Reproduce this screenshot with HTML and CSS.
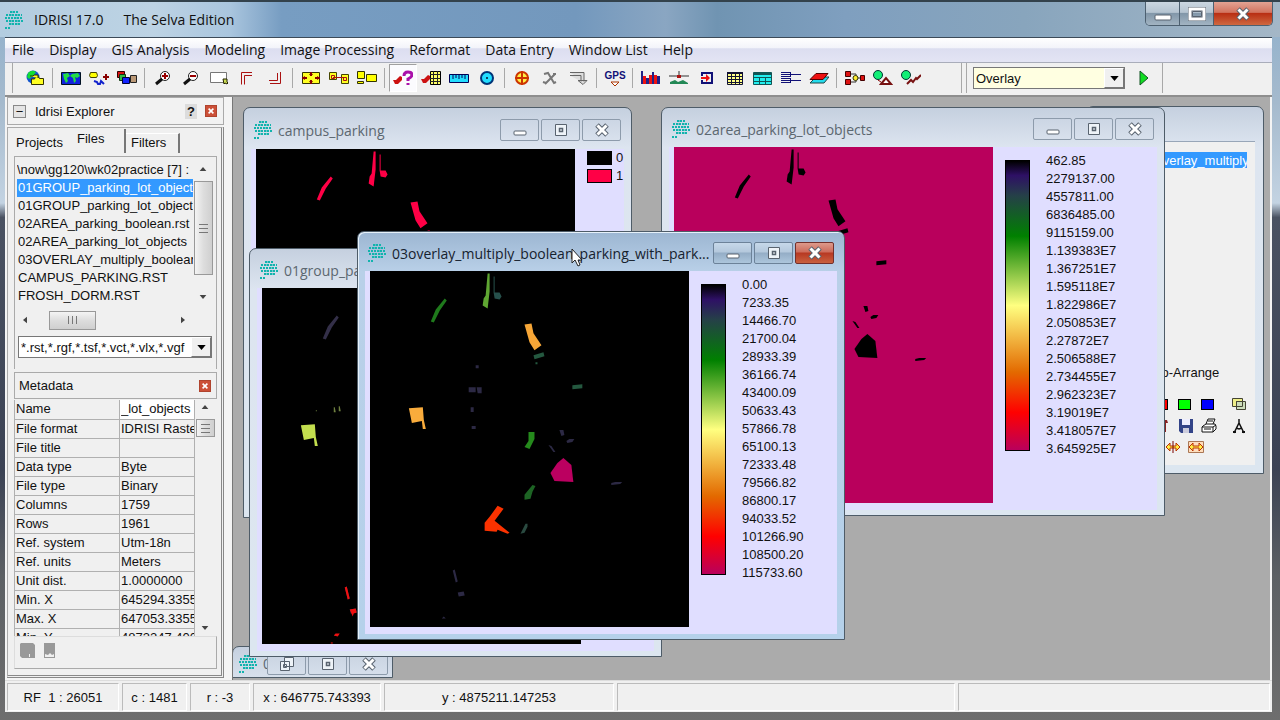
FILE: index.html
```html
<!DOCTYPE html>
<html lang="en">
  <head>
    <meta charset="UTF-8" />
    <meta name="viewport" content="width=device-width, initial-scale=1.0" />
    <title>IDRISI 17.0 The Selva Edition</title>
    <link rel="stylesheet" href="styles.css">
  </head>
  <body>
    <!-- Shared symbols -->
    <svg class="defs" width="0" height="0" aria-hidden="true">
      <symbol id="logo" viewBox="0 0 18 18">
        <g fill="none" stroke="#12b3ad" stroke-width="2" stroke-dasharray="2 1">
          <path d="M5 1h9M1 4h16M0 7h18M1 10h17M4 13h12M0 17h5" />
          <path d="M7 0v14M12 0v15" stroke-width="1" />
        </g>
      </symbol>
      <symbol id="min" viewBox="0 0 14 14">
        <rect x="1" y="8" width="12" height="4" rx="1" fill="#fff" stroke="#59636f" />
      </symbol>
      <symbol id="max" viewBox="0 0 14 14">
        <path d="M1.500 1.500h11v11h-11z" fill="#eef3f8" stroke="#59636f" />
        <path d="M5.500 5.500h3v3h-3z" fill="none" stroke="#59636f" stroke-width="1.500" />
      </symbol>
      <symbol id="restore" viewBox="0 0 14 14">
        <path d="M4.500 .5h9v9h-9zM.5 4.500h9v9h-9zM3.500 7.500h3v3h-3z" fill="#eef3f8" stroke="#59636f" />
      </symbol>
      <symbol id="close" viewBox="0 0 14 14">
        <path d="M2 2l10 10M12 2L2 12" stroke="#59636f" stroke-width="5" />
        <path d="M2.500 2.500l9 9M11.500 2.500l-9 9" stroke="#fff" stroke-width="3" />
      </symbol>
      <symbol id="down" viewBox="0 0 10 6"><path d="M0 0h10L5 6z" /></symbol>
      <symbol id="lots" viewBox="0 0 320 356">
        <path class="lot-strip" d="M75 27l2 2-7 10-6 12-3-1 5-12z" />
        <path class="lot-spike" d="M118 2h2v18l-2 17-5-3 1-7 2-3z" />
        <path class="lot-pond" d="M124 5h1v16l5 0 2 4-2 3-5-1-1-6z" />
        <path class="lot-north" d="M155 53l7-1 2 10 8 12-7 5-5-8z" />
        <path class="lot-teal" d="M164 84l10-3 1 4-10 3zM203 114l10-1v4l-10 1zM166 91h2v2h-2z" />
        <path class="lot-dusk" d="M106 94h3v3h-3zM99 116h7v5h-7zM107 116h5v6h-4zM101 136h3v5h-3zM102 155h4v3h-4zM190 159l4 0 1 5-3 1zM197 170l3-2 5 0-2 3-5 1zM179 174l3 1 4 6-2 0zM242 212l4-1 7 0-2 2-9 1zM83 300l2-1 3 12-2 1zM88 322l6-1 1 4-6 1zM72 348l2-2 2 2z" />
        <path class="lot-flag" d="M39 137l14-1 1 13 2 9h-3l-1-8-10 2z" />
        <path class="lot-specks" d="M54 122h1v1h-1zM72 119h1l1 5h-2zM77 118h1l1 5h-2z" />
        <path class="lot-green" d="M159 161h6v7l-5 10-5-2 4-6z" />
        <path class="lot-quad" d="M194 187l8 7 2 17-19-1-4-8 7-10z" />
        <path class="lot-forest" d="M163 214l3 1-3 6-2 7-6 1v-5z" />
        <path class="lot-vee" d="M128 235l6 3-9 12 15 12-2 1-10-4-1 2-12-1v-8l5-6z" />
        <path class="lot-slate" d="M156 253h2v3l-3 6-4 1z" />
        <path class="lot-south" d="M83 300l2-1 3 12-2 1zM88 322l6-1 1 4-3 1-1 3zM72 348l2-2 4 0-2 3zM69 355h2v1h-2z" />
      </symbol>
    </svg>

    <div class="app">
      <header class="titlebar">
        <svg class="logo"><use href="#logo" /></svg>
        <h1><span>IDRISI 17.0</span><span>The Selva Edition</span></h1>
        <div class="app-controls">
          <button type="button" aria-label="Minimize"><svg width="18" height="14" viewBox="0 0 18 14"><rect x="1" y="8" width="16" height="5" rx="1" fill="#fff" stroke="#59636f" /></svg></button>
          <button type="button" aria-label="Maximize"><svg width="18" height="14" viewBox="0 0 18 14"><path d="M2 2h14v10H2z" fill="none" stroke="#59636f" stroke-width="4" /><path d="M2 2h14v10H2z" fill="none" stroke="#fff" stroke-width="3" /><path d="M4.500 4.500h9v5h-9z" fill="none" stroke="#59636f" /></svg></button>
          <button type="button" class="app-close" aria-label="Close"><svg class="glyph"><use href="#close" /></svg></button>
        </div>
      </header>

      <nav class="menubar">
        <button type="button">File</button>
        <button type="button">Display</button>
        <button type="button">GIS Analysis</button>
        <button type="button">Modeling</button>
        <button type="button">Image Processing</button>
        <button type="button">Reformat</button>
        <button type="button">Data Entry</button>
        <button type="button">Window List</button>
        <button type="button">Help</button>
      </nav>

      <div class="toolbar">
        <div class="tools">
          <button type="button" aria-label="Explorer"><svg viewBox="0 0 20 16"><circle cx="8" cy="7" r="6.500" fill="#15c" /><path d="M3 3q4-4 8-1l-3 4-4 3-2-2z" fill="#1d3" /><path d="M6.500 9h3l1-2h3l1 1.500h4v6h-12z" fill="#ff2" stroke="#330" /><path d="M5 6h3l1-1h4v3" fill="#ff2" stroke="#330" /></svg></button>
          <i></i>
          <button type="button" aria-label="Display launcher"><svg viewBox="0 0 20 16"><path d="M.5 2.500h19v12H.5z" fill="#12d" stroke="#012" /><path d="M2 4l5-1 2 3-3 2 1 3-2 2-2-4zM11 4l6-1 2 3-3 2-2-1 1 4-2 2-1-5-3-2z" fill="#2d4" /></svg></button>
          <button type="button" aria-label="Add layer"><svg viewBox="0 0 20 16"><path d="M1.500 2.500h6l1 3-1 2h-6l-1-2z" fill="#ff0" stroke="#440" /><path d="M5 11l3 1 1 2h2l1-3 3 3" fill="none" stroke="#12c" stroke-width="2" /><path d="M14 7h6M17 4v6" stroke="#800" stroke-width="2" /></svg></button>
          <button type="button" aria-label="Composer"><svg viewBox="0 0 20 16"><path d="M.5 1.500h7v6h-7z" fill="#d11" stroke="#300" /><path d="M2.500 4.500h6v6h-6z" fill="#3b4" stroke="#131" /><path d="M5.500 7.500h7v6h-7z" fill="#12f" stroke="#003" /><path d="M13.500 5.500h6v7h-6z" fill="#b97" stroke="#222" /></svg></button>
          <i></i>
          <button type="button" aria-label="Zoom in"><svg viewBox="0 0 20 16"><circle cx="12" cy="6" r="4.500" fill="#fff" stroke="#222" /><path d="M9 9l-6 5" stroke="#111" stroke-width="3" /><path d="M9 6h6M12 3v6" stroke="#900" stroke-width="2" /></svg></button>
          <button type="button" aria-label="Zoom out"><svg viewBox="0 0 20 16"><circle cx="12" cy="6" r="4.500" fill="#fff" stroke="#222" /><path d="M9 9l-6 5" stroke="#111" stroke-width="3" /><path d="M9 6h6" stroke="#900" stroke-width="2" /></svg></button>
          <button type="button" aria-label="Zoom window"><svg viewBox="0 0 20 16"><path d="M1.500 2.500h16v10h-16z" fill="#fff" stroke="#777" /><path d="M14 9h4v3l1 1-1 1-2-1-1 1z" fill="#cd5" stroke="#220" /></svg></button>
          <button type="button" aria-label="Full extent"><svg viewBox="0 0 20 16"><path d="M15 2.500H4.500v12M15 5.500H7.500v9" fill="none" stroke="#a11" /></svg></button>
          <button type="button" aria-label="Fit window"><svg viewBox="0 0 20 16"><path d="M5 13.500h10.500V2M4 10.500h8.500V3" fill="none" stroke="#a11" /></svg></button>
          <i></i>
          <button type="button" aria-label="Full screen"><svg viewBox="0 0 20 16"><path d="M1.500 2.500h17v11h-17z" fill="#ff2" stroke="#330" /><path d="M1 8h5M19 8h-5M10 2v4M10 14v-4" stroke="#800" stroke-width="2" /><path d="M8 5h4l-2-3zM8 11h4l-2 3zM4 6v4L1 8zM16 6v4l3-2z" fill="#800" /></svg></button>
          <button type="button" aria-label="Link maps"><svg viewBox="0 0 20 16"><path d="M.5 2.500h7v7h-7zM12.500 4.500h7v9h-7z" fill="#ff2" stroke="#440" /><path d="M4 7.500h12" stroke="#a11" /><path d="M2.500 5.500h3v3h-3zM14.500 7.500h3v3h-3z" fill="none" stroke="#a11" /></svg></button>
          <button type="button" aria-label="Arrange maps"><svg viewBox="0 0 20 16"><path d="M.5 1.500h7v7h-7zM9.500 4.500h10v7h-10zM.5 11.500h6v2h-6z" fill="#ff0" stroke="#330" /></svg></button>
          <i></i>
          <button type="button" class="pressed" aria-label="Cursor inquiry"><svg viewBox="0 0 20 16"><path d="M0 10h3l4-4 2 1v3l-4 4H2z" fill="#c11" /><path d="M11 6q0-4 4-4t4 3q0 2-4 4v2M15 13v2" fill="none" stroke="#a1a" stroke-width="3" /></svg></button>
          <button type="button" aria-label="Feature properties"><svg viewBox="0 0 20 16"><path d="M0 9h3l4-4 2 1v3l-4 4H2z" fill="#c11" /><path d="M9.500 1.500h10v13h-10z" fill="#ff6" stroke="#000" /><path d="M12.500 1v13M16.500 1v13M9 4.500h10M9 8.500h10M9 11.500h10" stroke="#222" /></svg></button>
          <button type="button" aria-label="Measure"><svg viewBox="0 0 20 16"><path d="M.5 4.500h19v8H.5z" fill="#2df" stroke="#005" /><path d="M4 5v4M7 5v3M10 5v4M13 5v3M16 5v4" stroke="#005" /></svg></button>
          <button type="button" aria-label="Buffer"><svg viewBox="0 0 20 16"><circle cx="10" cy="8" r="6" fill="#2df" stroke="#037" stroke-width="2" /><circle cx="10" cy="8" r="1" fill="#013" /></svg></button>
          <i></i>
          <button type="button" aria-label="Digitize"><svg viewBox="0 0 20 16"><circle cx="9" cy="8" r="6" fill="#fe4" stroke="#c30" stroke-width="2" /><path d="M9 1v14M2 8h14" stroke="#c30" stroke-width="2" /></svg></button>
          <button type="button" aria-label="Delete feature"><svg viewBox="0 0 20 16"><path d="M3 4l4-1 6 10 2-1M14 4L4 14M2 12l3 1M12 4h3" fill="none" stroke="#777" stroke-width="2" /></svg></button>
          <button type="button" aria-label="Save digitized data"><svg viewBox="0 0 20 16"><path d="M1 2.500h14v9M1 5.500h11v6M9 10.500h9l-4 4z" fill="#ddd" stroke="#666" /></svg></button>
          <i></i>
          <button type="button" class="gps" aria-label="GPS"><span>GPS</span><svg viewBox="0 0 10 5"><path d="M1 1h8L5 5z" fill="#fff" stroke="#a30" /></svg></button>
          <i></i>
          <button type="button" aria-label="Histogram"><svg viewBox="0 0 20 16"><path d="M0 1h2v13H0zM5 8h3v6H5zM11 2h2v12h-2zM16 6h3v8h-3z" fill="#228" /><path d="M2 6h3v8H2zM8 5h3v9H8zM13 5h3v9h-3z" fill="#e11" /></svg></button>
          <button type="button" aria-label="Image to image"><svg viewBox="0 0 20 16"><path d="M0 6h20M10 1v7" stroke="#333" /><path d="M8 5h4v3H8z" fill="#a11" /><path d="M1 14v-2l5-2 3 2 5-2 5 3v1z" fill="#285" /></svg></button>
          <button type="button" aria-label="Import"><svg viewBox="0 0 20 16"><path d="M5 6V3h10v10H5v-3" fill="none" stroke="#117" stroke-width="2" /><path d="M4 7h5V4l4 4-4 4V9H4z" fill="#e11" /></svg></button>
          <button type="button" aria-label="Database"><svg viewBox="0 0 20 16"><path d="M2.500 2.500h15v12h-15z" fill="#ff8" stroke="#113" /><path d="M2 3h16" stroke="#113" stroke-width="2" /><path d="M6.500 2v12M10.500 2v12M14.500 2v12M2 6.500h15M2 9.500h15M2 12.500h15" stroke="#113" /></svg></button>
          <button type="button" aria-label="Edit values"><svg viewBox="0 0 20 16"><path d="M.5 2.500h18v12H.5z" fill="#2ee" stroke="#155" /><path d="M1 4h18" stroke="#155" stroke-width="2" /><path d="M1 7.500h18M6.500 8v7M12.500 8v7M1 11.500h18" stroke="#155" /></svg></button>
          <button type="button" aria-label="Reclass"><svg viewBox="0 0 20 16"><path d="M0 2.500h9M0 4.500h9M0 6.500h9M0 8.500h9M0 10.500h9M0 12.500h9M9.500 2v5M9.500 8v5M10 4.500h10M10 10.500h10" fill="none" stroke="#117" /></svg></button>
          <button type="button" aria-label="Overlay"><svg viewBox="0 0 20 16"><path d="M1 13l6-6h13l-5 6H1z" fill="#2de" stroke="#244" /><path d="M1 9.500l6-6h12l-5 6z" fill="#e11" stroke="#500" /></svg></button>
          <i></i>
          <button type="button" aria-label="Macro modeler"><svg viewBox="0 0 20 16"><path d="M5 4h6v8H5M12 8h5" fill="none" stroke="#333" /><path d="M.5 1.500h5v5h-5zM.5 9.500h5v5h-5zM15.500 5.500h4v5h-4z" fill="#d11" stroke="#400" /><circle cx="10.500" cy="8" r="2.500" fill="#fe3" stroke="#330" /></svg></button>
          <button type="button" aria-label="Land change modeler"><svg viewBox="0 0 20 16"><circle cx="5" cy="5" r="4.500" fill="#1e7" stroke="#033" /><path d="M5 10l3 2" stroke="#800" /><path d="M8 14l5-6 5 6z" fill="#fff" stroke="#711" stroke-width="2" /></svg></button>
          <button type="button" aria-label="Earth trends modeler"><svg viewBox="0 0 20 16"><circle cx="5" cy="5" r="4.500" fill="#1e7" stroke="#033" /><path d="M6 14l4-4 2 2 3-4 1 1 4-4" fill="none" stroke="#711" stroke-width="2" /></svg></button>
        </div>
        <div class="shortcut">
          <label class="combo combo-shortcut">
            <select aria-label="Shortcut"><option>Overlay</option></select>
            <span class="combo-arrow"><svg><use href="#down" /></svg></span>
          </label>
          <button type="button" class="run" aria-label="Run"><svg viewBox="0 0 10 16"><path d="M1 1l8 7-8 7z" fill="#1d2" stroke="#152" /></svg></button>
        </div>
      </div>

      <div class="main">
        <aside class="explorer">
          <div class="panel-head">
            <span class="fold">−</span>
            <h2>Idrisi Explorer</h2>
            <b>?</b>
            <button type="button" class="x" aria-label="Close explorer"><svg viewBox="0 0 10 10"><path d="M2 2l6 6M8 2L2 8" stroke="#fff" stroke-width="2" /></svg></button>
          </div>
          <div class="panel-body">
            <div class="tabs">
              <button type="button">Projects</button>
              <button type="button" class="active">Files</button>
              <button type="button">Filters</button>
            </div>
            <div class="files">
              <div class="scroll-area">
                <ul class="file-list">
                  <li class="folder">\now\gg120\wk02practice [7] :</li>
                  <li class="selected">01GROUP_parking_lot_objects.rgf</li>
                  <li>01GROUP_parking_lot_objects.rst</li>
                  <li>02AREA_parking_boolean.rst</li>
                  <li>02AREA_parking_lot_objects</li>
                  <li>03OVERLAY_multiply_boolean</li>
                  <li>CAMPUS_PARKING.RST</li>
                  <li>FROSH_DORM.RST</li>
                </ul>
                <div class="vscroll">
                  <svg class="up"><use href="#down" /></svg>
                  <span class="thumb thumb-long"></span>
                  <svg class="dn"><use href="#down" /></svg>
                </div>
              </div>
              <div class="hscroll">
                <svg class="lf"><use href="#down" /></svg>
                <span class="hthumb"></span>
                <svg class="rt"><use href="#down" /></svg>
              </div>
              <label class="combo combo-filter">
                <select aria-label="File filter"><option>*.rst,*.rgf,*.tsf,*.vct,*.vlx,*.vgf</option></select>
                <span class="combo-arrow"><svg><use href="#down" /></svg></span>
              </label>
            </div>
            <div class="meta">
              <div class="meta-head">
                <h2>Metadata</h2>
                <button type="button" class="x" aria-label="Close metadata"><svg viewBox="0 0 10 10"><path d="M2 2l6 6M8 2L2 8" stroke="#fff" stroke-width="2" /></svg></button>
              </div>
              <div class="meta-rows">
                <div class="meta-clip">
                  <table>
                    <tr><th><label for="metaName">Name</label></th><td class="edit"><input id="metaName" type="text" value="_lot_objects" /></td></tr>
                    <tr><th>File format</th><td>IDRISI Raster</td></tr>
                    <tr><th>File title</th><td></td></tr>
                    <tr><th>Data type</th><td>Byte</td></tr>
                    <tr><th>File type</th><td>Binary</td></tr>
                    <tr><th>Columns</th><td>1759</td></tr>
                    <tr><th>Rows</th><td>1961</td></tr>
                    <tr><th>Ref. system</th><td>Utm-18n</td></tr>
                    <tr><th>Ref. units</th><td>Meters</td></tr>
                    <tr><th>Unit dist.</th><td>1.0000000</td></tr>
                    <tr><th>Min. X</th><td>645294.3355</td></tr>
                    <tr><th>Max. X</th><td>647053.3355</td></tr>
                    <tr><th>Min. Y</th><td>4873247.400</td></tr>
                  </table>
                </div>
                <div class="vscroll">
                  <svg class="up"><use href="#down" /></svg>
                  <span class="thumb"></span>
                  <svg class="dn"><use href="#down" /></svg>
                </div>
              </div>
              <div class="meta-foot">
                <button type="button" aria-label="Save"><svg viewBox="0 0 15 15"><path d="M1 0h12l2 2v13H2l-2-2V1zM9 11h1v3H9z" fill="#999" fill-rule="evenodd" /></svg></button>
                <button type="button" aria-label="Categories"><svg viewBox="0 0 12 15"><path d="M0 0h11v15H0zM1 14h9v-3l-2 1-2-2-2 2-3-1z" fill="#999" fill-rule="evenodd" /></svg></button>
              </div>
            </div>
          </div>
        </aside>

        <main class="desktop">
          <section class="window win-mini">
            <div class="win-title">
              <svg class="logo"><use href="#logo" /></svg>
              <h3>03overlay</h3>
              <div class="win-controls">
                <button type="button" aria-label="Restore"><svg class="glyph"><use href="#restore" /></svg></button>
                <button type="button" aria-label="Maximize"><svg class="glyph"><use href="#max" /></svg></button>
                <button type="button" aria-label="Close"><svg class="glyph"><use href="#close" /></svg></button>
              </div>
            </div>
          </section>

          <section class="window win-composer">
            <div class="composer">
              <div class="layer">03overlay_multiply</div>
              <p class="arrange">Auto-Arrange</p>
              <div class="composer-tools">
                <button type="button" class="swatch red" aria-label="Red"></button>
                <button type="button" class="swatch lime" aria-label="Green"></button>
                <button type="button" class="swatch blue" aria-label="Blue"></button>
                <button type="button" aria-label="Blend"><svg viewBox="0 0 16 16"><path d="M1.500 2.500h10v8h-10z" fill="#ee8" stroke="#443" /><path d="M5.500 5.500h9v8h-9z" fill="#cdb" stroke="#443" /><path d="M5.500 5.500h6v5h-6z" fill="none" stroke="#443" /></svg></button>
                <button type="button" aria-label="Layer properties"><svg viewBox="0 0 16 16"><path d="M2 2h10l1 3h-2v9H9V5" fill="#822" /></svg></button>
                <button type="button" aria-label="Save composition"><svg viewBox="0 0 16 16"><path d="M1 1h14v14H3l-2-2z" fill="#348" /><path d="M4 1h8v6H4z" fill="#eef" /><path d="M5 10h6v5H5z" fill="#ccd" /></svg></button>
                <button type="button" aria-label="Print"><svg viewBox="0 0 16 16"><path d="M5 6l2-5h7l-2 5M2 8l3-2h9l1 2v3l-3 3H1V9zM1 9h11v5M12 9l3-2" fill="#fff" stroke="#111" /><path d="M3 11h7M7 3h5" stroke="#111" /></svg></button>
                <button type="button" aria-label="Map properties"><svg viewBox="0 0 16 16"><path d="M8 1v4M3 15l5-10 5 10M5 10l3 1 3-1" fill="none" stroke="#111" stroke-width="1.500" /><path d="M2 14h3M11 14h3" stroke="#111" stroke-width="2" /></svg></button>
              </div>
              <div class="composer-tools stretch">
                <button type="button" aria-label="Stretch"><svg viewBox="0 0 16 16"><path d="M1 8l4-4v3h6V4l4 4-4 4V9H5v3z" fill="#fe4" stroke="#b30" /><path d="M8 2v12" stroke="#700" /></svg></button>
                <button type="button" aria-label="Stretch extent"><svg viewBox="0 0 16 16"><path d="M.5 2.500h15v11H.5z" fill="#fdb" stroke="#a75" /><path d="M1 8l4-4v3h6V4l4 4-4 4V9H5v3z" fill="#fe4" stroke="#b30" /></svg></button>
              </div>
            </div>
          </section>

          <section class="window win-campus">
            <div class="win-title">
              <svg class="logo"><use href="#logo" /></svg>
              <h3>campus_parking</h3>
              <div class="win-controls">
                <button type="button" aria-label="Minimize"><svg class="glyph"><use href="#min" /></svg></button>
                <button type="button" aria-label="Maximize"><svg class="glyph"><use href="#max" /></svg></button>
                <button type="button" aria-label="Close"><svg class="glyph"><use href="#close" /></svg></button>
              </div>
            </div>
            <div class="win-body">
              <svg class="map"><use href="#lots" /></svg>
              <ul class="key">
                <li><span class="key-box"></span>0</li>
                <li><span class="key-box one"></span>1</li>
              </ul>
            </div>
          </section>

          <section class="window win-area">
            <div class="win-title">
              <svg class="logo"><use href="#logo" /></svg>
              <h3>02area_parking_lot_objects</h3>
              <div class="win-controls">
                <button type="button" aria-label="Minimize"><svg class="glyph"><use href="#min" /></svg></button>
                <button type="button" aria-label="Maximize"><svg class="glyph"><use href="#max" /></svg></button>
                <button type="button" aria-label="Close"><svg class="glyph"><use href="#close" /></svg></button>
              </div>
            </div>
            <div class="win-body">
              <svg class="map"><use href="#lots" /></svg>
              <div class="legend">
                <span class="ramp"></span>
                <ul>
                  <li>462.85</li>
                  <li>2279137.00</li>
                  <li>4557811.00</li>
                  <li>6836485.00</li>
                  <li>9115159.00</li>
                  <li>1.139383E7</li>
                  <li>1.367251E7</li>
                  <li>1.595118E7</li>
                  <li>1.822986E7</li>
                  <li>2.050853E7</li>
                  <li>2.27872E7</li>
                  <li>2.506588E7</li>
                  <li>2.734455E7</li>
                  <li>2.962323E7</li>
                  <li>3.19019E7</li>
                  <li>3.418057E7</li>
                  <li>3.645925E7</li>
                </ul>
              </div>
            </div>
          </section>

          <section class="window win-group">
            <div class="win-title">
              <svg class="logo"><use href="#logo" /></svg>
              <h3>01group_parking_lot_objects</h3>
            </div>
            <div class="win-body">
              <svg class="map"><use href="#lots" /></svg>
            </div>
          </section>

          <section class="window win-overlay">
            <div class="win-title">
              <svg class="logo"><use href="#logo" /></svg>
              <h3>03overlay_multiply_boolean_parking_with_park...</h3>
              <div class="win-controls">
                <button type="button" aria-label="Minimize"><svg class="glyph"><use href="#min" /></svg></button>
                <button type="button" aria-label="Maximize"><svg class="glyph"><use href="#max" /></svg></button>
                <button type="button" class="win-close" aria-label="Close"><svg class="glyph"><use href="#close" /></svg></button>
              </div>
            </div>
            <div class="win-body">
              <svg class="map"><use href="#lots" /></svg>
              <div class="legend">
                <span class="ramp"></span>
                <ul>
                  <li>0.00</li>
                  <li>7233.35</li>
                  <li>14466.70</li>
                  <li>21700.04</li>
                  <li>28933.39</li>
                  <li>36166.74</li>
                  <li>43400.09</li>
                  <li>50633.43</li>
                  <li>57866.78</li>
                  <li>65100.13</li>
                  <li>72333.48</li>
                  <li>79566.82</li>
                  <li>86800.17</li>
                  <li>94033.52</li>
                  <li>101266.90</li>
                  <li>108500.20</li>
                  <li>115733.60</li>
                </ul>
              </div>
            </div>
          </section>

          <svg class="pointer" viewBox="0 0 12 19"><path d="M1 1v14l3-3 3 6 2-1-2-5h4z" fill="#fff" stroke="#222" /></svg>
        </main>
      </div>

      <footer class="statusbar">
        <span class="st-rf">RF&nbsp; 1 : 26051</span>
        <span class="st-c">c : 1481</span>
        <span class="st-r">r : -3</span>
        <span class="st-x">x : 646775.743393</span>
        <span class="st-y">y : 4875211.147253</span>
        <span class="st-msg"></span>
        <span class="st-end"></span>
      </footer>
    </div>
  </body>
</html>
```

FILE: styles.css
```css
* {
  box-sizing: border-box;
}
body {
  margin: 0;
  font-family: "Liberation Sans", Arial, sans-serif;
  font-size: 13px;
  color: #111;
}
h1,
h2,
h3,
p,
ul {
  margin: 0;
  padding: 0;
  font-size: inherit;
  font-weight: normal;
  list-style: none;
}
button {
  border: none;
  background: none;
  padding: 0;
  margin: 0;
  font: inherit;
  color: inherit;
}
svg {
  display: block;
}
.defs {
  position: absolute;
}
.app {
  display: flex;
  flex-direction: column;
  height: 100vh;
  padding: 0 8px 8px 5px;
  border-top: 2px solid #33424c;
  background: linear-gradient(#8fb0cc, #a5bacd 14%, #c3d3e2 28%, #4a5262 30%, #3b4254 65%, #5c6064 80%, #6e6e6e);
}

/* Title bar */
.titlebar {
  display: flex;
  align-items: center;
  height: 35px;
  margin: 0 -8px 0 -5px;
  padding: 0 7px 0 5px;
  background: linear-gradient(90deg, #b3cde0, #bdd3e4 12%, #a9c5de 18%, #779dc2 22%, #7398bd 45%, #8aa6c2 52%, #7094b2 56%, #7f9fbf 66%, #88a5bd 80%, #a4b7c7);
  font-family: "Open Sans", "Noto Sans", sans-serif;
  font-size: 14px;
}
.logo {
  width: 18px;
  height: 18px;
  flex: none;
}
.titlebar h1 {
  display: flex;
  gap: 20px;
  flex: 1;
  padding-left: 11px;
}
.app-controls {
  display: flex;
  align-self: flex-start;
  height: 24px;
  border: 1px solid #4d6070;
  border-top: none;
  border-radius: 0 0 5px 5px;
  overflow: hidden;
}
.app-controls button {
  display: flex;
  align-items: center;
  justify-content: center;
  width: 34px;
  border-right: 1px solid #4d6070;
  background: linear-gradient(#cbd7e1, #b5c4d1 45%, #8297a9 50%, #a2b4c2);
}
.app-controls .app-close {
  width: 58px;
  border-right: none;
  background: linear-gradient(#e3a393, #d27460 45%, #b92f14 50%, #cf6840);
}
.glyph {
  width: 14px;
  height: 14px;
}

/* Menu */
.menubar {
  display: flex;
  gap: 15px;
  height: 26px;
  padding: 0 7px 2px;
  border-top: 1px solid #3c4a58;
  border-bottom: 1px solid #a9adba;
  background: linear-gradient(#fff, #f3f4fa 40%, #dcdef0 45%, #e3e4f4);
  font-family: "Open Sans", "Noto Sans", sans-serif;
  font-size: 14px;
}

/* Toolbar */
.toolbar {
  display: flex;
  height: 34px;
  padding-bottom: 2px;
  border-bottom: 2px solid #8e8e8e;
  background: #f0f0f0;
}
.tools {
  display: flex;
  align-items: center;
  width: 950px;
  padding-left: 8px;
  margin-left: 7px;
  border-left: 1px solid #a8a8a8;
  border-right: 1px solid #a8a8a8;
}
.tools button {
  display: flex;
  align-items: center;
  justify-content: center;
  width: 28px;
  height: 28px;
}
.tools svg {
  width: 20px;
  height: 16px;
}
.tools i {
  width: 1px;
  height: 20px;
  margin: 0 4px 0 3px;
  background: #a8a8a8;
}
.tools .pressed {
  background: #fbfbfe;
  border: 1px solid #a0a0a0;
  border-right-color: #fff;
  border-bottom-color: #fff;
}
.tools .gps {
  flex-direction: column;
  font-size: 10px;
  font-weight: bold;
  line-height: 10px;
  color: #117;
}
.tools .gps svg {
  width: 10px;
  height: 5px;
}
.shortcut {
  display: flex;
  align-items: center;
  gap: 14px;
  width: 197px;
  margin-left: 4px;
  padding-left: 6px;
  border-left: 1px solid #a8a8a8;
  border-right: 1px solid #a8a8a8;
}
.run svg {
  width: 10px;
  height: 16px;
}
.combo {
  display: flex;
  height: 22px;
  border: 1px solid #777;
  background: #fff;
}
.combo select {
  flex: 1;
  min-width: 0;
  appearance: none;
  border: none;
  border-radius: 0;
  padding: 0 2px;
  background: none;
  color: inherit;
  font: inherit;
}
.combo-arrow {
  display: flex;
  align-items: center;
  justify-content: center;
  width: 20px;
  background: #f0f0f0;
  border: 1px solid #fff;
  border-right-color: #777;
  border-bottom-color: #777;
  pointer-events: none;
}
.combo-arrow svg {
  width: 9px;
  height: 5px;
}
.combo-shortcut {
  width: 152px;
  background: #ffffe1;
}

/* Explorer panel */
.main {
  display: flex;
  flex: 1;
  min-height: 0;
  background: #f4f4f4;
}
.explorer {
  display: flex;
  flex-direction: column;
  width: 219px;
  margin-right: 8px;
  padding: 0 0 2px 2px;
}
.panel-head {
  display: flex;
  align-items: center;
  height: 28px;
  padding: 0 6px 0 5px;
  border: 1px solid #aaa;
  background: #f2f2f2;
}
.panel-head h2 {
  flex: 1;
  padding-left: 9px;
}
.panel-head b {
  padding: 0 2px;
  margin-right: 8px;
  background: #dcdcdc;
}
.fold {
  width: 13px;
  height: 13px;
  line-height: 11px;
  text-align: center;
  border: 1px solid #888;
  background: #e4e4e4;
}
.x {
  width: 12px;
  height: 12px;
  padding: 1px;
  background: #cc5038;
  border: 1px solid #b0442e;
}
.panel-body {
  display: flex;
  flex-direction: column;
  flex: 1;
  min-height: 0;
  margin-top: 2px;
  padding: 4px 4px 6px 6px;
  border: 1px solid #aaa;
  border-right: 3px double #888;
  border-bottom: 3px double #888;
  background: #f0f0f0;
}
.tabs {
  display: flex;
  align-items: flex-end;
  height: 21px;
}
.tabs button {
  height: 20px;
  padding: 0 7px 2px 2px;
}
.tabs .active {
  height: 24px;
  width: 56px;
  padding: 0 0 6px 7px;
  text-align: left;
  border-right: 2px solid #777;
}
.tabs button:last-child {
  border-top: 1px solid #fff;
  border-right: 2px solid #777;
  padding-left: 5px;
  width: 54px;
  text-align: left;
}
.files {
  padding: 4px 2px 6px 2px;
  margin-top: 3px;
  height: 213px;
  border-top: 1px solid #aaa;
  border-right: 1px solid #aaa;
  border-left: 1px solid #aaa;
}
.scroll-area {
  display: flex;
  height: 144px;
}
.file-list {
  width: 176px;
  overflow: hidden;
  line-height: 18px;
  white-space: nowrap;
}
.file-list li {
  padding-left: 1px;
}
.file-list .folder {
  padding-left: 0;
}
.file-list .selected {
  background: #3399ff;
  color: #fff;
}
.vscroll {
  display: flex;
  flex-direction: column;
  align-items: center;
  width: 20px;
  padding: 6px 0;
}
.vscroll svg,
.hscroll svg {
  width: 8px;
  height: 4px;
  fill: #444;
}
.vscroll .up {
  transform: rotate(180deg);
}
.vscroll .dn {
  margin-top: auto;
}
.thumb {
  width: 19px;
  height: 18px;
  margin-top: 10px;
  border: 1px solid #999;
  background: repeating-linear-gradient(#777 0 1px, transparent 1px 4px) center / 9px 9px no-repeat, linear-gradient(90deg, #f4f4f4, #ddd 50%, #cfcfcf);
}
.thumb-long {
  height: 94px;
}
.hscroll {
  display: flex;
  align-items: center;
  width: 177px;
  height: 20px;
  padding: 0 7px 0 4px;
  margin-top: 5px;
}
.lf {
  transform: rotate(90deg);
}
.rt {
  margin-left: auto;
  transform: rotate(-90deg);
}
.hthumb {
  width: 47px;
  height: 19px;
  margin-left: 20px;
  border: 1px solid #999;
  background: repeating-linear-gradient(90deg, #777 0 1px, transparent 1px 4px) center / 9px 8px no-repeat, linear-gradient(#f4f4f4, #ddd 50%, #cfcfcf);
}
.combo-filter {
  margin: 6px 2px 0 1px;
}

/* Metadata */
.meta {
  display: flex;
  flex-direction: column;
  flex: 1;
  min-height: 0;
  margin-top: 3px;
}
.meta-head {
  display: flex;
  align-items: center;
  justify-content: space-between;
  height: 27px;
  padding: 0 5px 0 4px;
  border: 1px solid #aaa;
}
.meta-rows {
  display: flex;
  flex: 1;
  min-height: 0;
}
.meta-clip {
  width: 181px;
  padding-top: 1px;
  overflow: hidden;
}
.meta table {
  width: 181px;
  table-layout: fixed;
  border-collapse: collapse;
}
.meta tr {
  height: 19px;
}
.meta th,
.meta td {
  overflow: hidden;
  padding: 0 1px;
  line-height: 18px;
  font-weight: normal;
  text-align: left;
  white-space: nowrap;
  border: 1px solid #b0b0b0;
  border-top: none;
}
.meta th {
  width: 105px;
}
.meta .edit {
  background: #fff;
}
.meta input {
  display: block;
  width: 100%;
  height: 18px;
  border: none;
  padding: 0;
  background: none;
  color: inherit;
  font: inherit;
}
.meta-foot {
  display: flex;
  align-items: center;
  gap: 9px;
  height: 33px;
  padding: 0 5px 4px;
  border: 1px solid #ddd;
  border-right-color: #aaa;
  border-bottom-color: #aaa;
}
.meta-foot svg {
  height: 15px;
}

/* Document windows */
.desktop {
  position: relative;
  flex: 1;
  overflow: hidden;
  margin-right: 2px;
  border-left: 1px solid #777;
  background: #ababab;
}
.window {
  position: absolute;
  border: 1px solid #4e5c68;
  border-radius: 7px 7px 0 0;
  padding: 0 12px 12px;
  background: linear-gradient(#c5d0df, #dde5f0 40px, #dce6f0);
  overflow: hidden;
  color: #5c6770;
}
.win-title {
  display: flex;
  align-items: center;
  height: 39px;
  padding-top: 3px;
  margin: 0 -2px;
}
.win-title h3 {
  flex: 1;
  padding-left: 6px;
  overflow: hidden;
  white-space: nowrap;
  font-family: "Open Sans", "Noto Sans", sans-serif;
  font-size: 14px;
}
.win-controls {
  display: flex;
  gap: 2px;
}
.win-controls button {
  display: flex;
  align-items: center;
  justify-content: center;
  width: 39px;
  height: 22px;
  border: 1px solid #8d9bab;
  border-radius: 2px;
}
.win-body {
  display: flex;
  margin: 0 -5px -7px;
  padding: 0 5px 7px;
  background: #e0deff;
  color: #111;
}
.map {
  width: 319px;
  height: 356px;
  flex: none;
  background: #000;
}
.win-campus {
  left: 10px;
  top: 10px;
  width: 389px;
}
.win-campus .win-title {
  height: 41px;
}
.win-area {
  left: 428px;
  top: 10px;
  width: 504px;
}
.win-group {
  left: 16px;
  top: 151px;
  width: 413px;
}
.win-overlay {
  left: 124px;
  top: 134px;
  width: 488px;
  color: #16222e;
  background: linear-gradient(#9cb6d2, #b9d0e8 40px, #b5d1ea);
  box-shadow: inset 1px 1px #e6f1fa;
}
.win-mini {
  left: -1px;
  top: 549px;
  width: 161px;
  height: 32px;
  padding: 0 4px;
}
.win-mini .win-title {
  height: 31px;
  padding-top: 2px;
  margin: 0 0 0 2px;
}
.win-overlay .win-controls button {
  border-color: #6c8299;
  background: linear-gradient(#c6d8ea, #b4c8dc 45%, #94adc6 50%, #adc6dc);
}
.win-overlay .win-controls .win-close {
  border-color: #73302c;
  background: linear-gradient(#dd9a8c, #cd6c5b 45%, #b73822 50%, #c9613f);
}

/* Lot colours */
.lot-strip { fill: var(--strip, var(--lot)); }
.lot-spike { fill: var(--spike, var(--lot)); }
.lot-pond { fill: var(--pond, var(--lot)); }
.lot-north { fill: var(--north, var(--lot)); }
.lot-teal { fill: var(--teal, var(--lot)); }
.lot-dusk { fill: var(--dusk, var(--lot)); }
.lot-flag { fill: var(--flag, var(--lot)); }
.lot-specks { fill: var(--specks, transparent); }
.lot-green { fill: var(--green, var(--lot)); }
.lot-quad { fill: var(--quad, var(--lot)); }
.lot-forest { fill: var(--forest, var(--lot)); }
.lot-vee { fill: var(--vee, var(--lot)); }
.lot-slate { fill: var(--slate, var(--lot)); }
.lot-south { fill: var(--south, transparent); }
.win-campus .map {
  --lot: #ff0046;
}
.win-area .map {
  --lot: #000;
  background: #b9005c;
}
.win-group .map {
  --lot: #332f48;
  --flag: #c3de4e;
  --specks: #6f8040;
  --south: #f01010;
}
.win-overlay .map {
  --strip: #1f7a1c;
  --spike: #5fa632;
  --pond: #26504b;
  --north: #f6a637;
  --teal: #24583f;
  --dusk: #2c2944;
  --flag: #f9ac3c;
  --green: #258a1c;
  --quad: #bb0060;
  --forest: #1d6424;
  --vee: #fb3200;
  --slate: #2a4a40;
}

/* Legends */
.key {
  padding: 0 0 0 12px;
  line-height: 18px;
}
.key li {
  display: flex;
  align-items: center;
  gap: 4px;
}
.key-box {
  width: 25px;
  height: 14px;
  border: 1px solid #000;
  background: #000;
}
.key-box.one {
  background: #ff0046;
}
.legend {
  display: flex;
  align-items: flex-start;
  gap: 16px;
  padding: 5px 0 0 12px;
  line-height: 18px;
}
.ramp {
  width: 25px;
  height: 291px;
  margin-top: 8px;
  border: 1px solid #000;
  background: linear-gradient(#000, #2e1065 5%, #254048 12%, #008000 26%, #ffff80 50%, #e36a00 73%, #ff0000 87%, #b9005c);
}

/* Composer */
.win-composer {
  left: 853px;
  top: 9px;
  width: 178px;
  padding: 34px 8px 8px;
}
.composer {
  height: 324px;
  padding: 10px 8px 0 0;
  border-top: 1px solid #98a6b8;
  background: #f0f0f0;
  color: #111;
}
.layer {
  height: 16px;
  padding-left: 46px;
  line-height: 17px;
  overflow: hidden;
  background: #3399ff;
  color: #fff;
}
.arrange {
  padding: 197px 0 0 47px;
  line-height: 16px;
}
.composer-tools {
  display: grid;
  grid-template-columns: 23px 23px 30px 16px;
  justify-content: end;
  row-gap: 6px;
  padding-top: 15px;
}
.composer-tools button {
  width: 16px;
  height: 16px;
}
.composer-tools .swatch {
  width: 13px;
  height: 11px;
  margin-top: 3px;
  border: 1px solid #000;
}
.red {
  background: #f00;
}
.lime {
  background: #0f0;
}
.blue {
  background: #00f;
}
.composer-tools.stretch {
  grid-template-columns: 23px 16px;
  padding: 5px 43px 0 0;
}
.pointer {
  position: absolute;
  left: 338px;
  top: 151px;
  width: 12px;
  height: 19px;
}

/* Status bar */
.statusbar {
  display: flex;
  align-items: center;
  gap: 3px;
  height: 32px;
  padding: 2px 2px 1px;
  border-top: 1px solid #ddd;
  background: #f0f0f0;
}
.statusbar span {
  height: 28px;
  line-height: 27px;
  text-align: center;
  border: 1px solid #bbb;
  border-right-color: #fff;
  border-bottom-color: #fff;
}
.st-rf {
  width: 112px;
}
.st-c {
  width: 65px;
}
.st-r {
  width: 60px;
}
.st-x {
  width: 128px;
}
.st-y {
  width: 230px;
}
.st-msg {
  flex: 1;
}
.st-end {
  width: 312px;
}
```
